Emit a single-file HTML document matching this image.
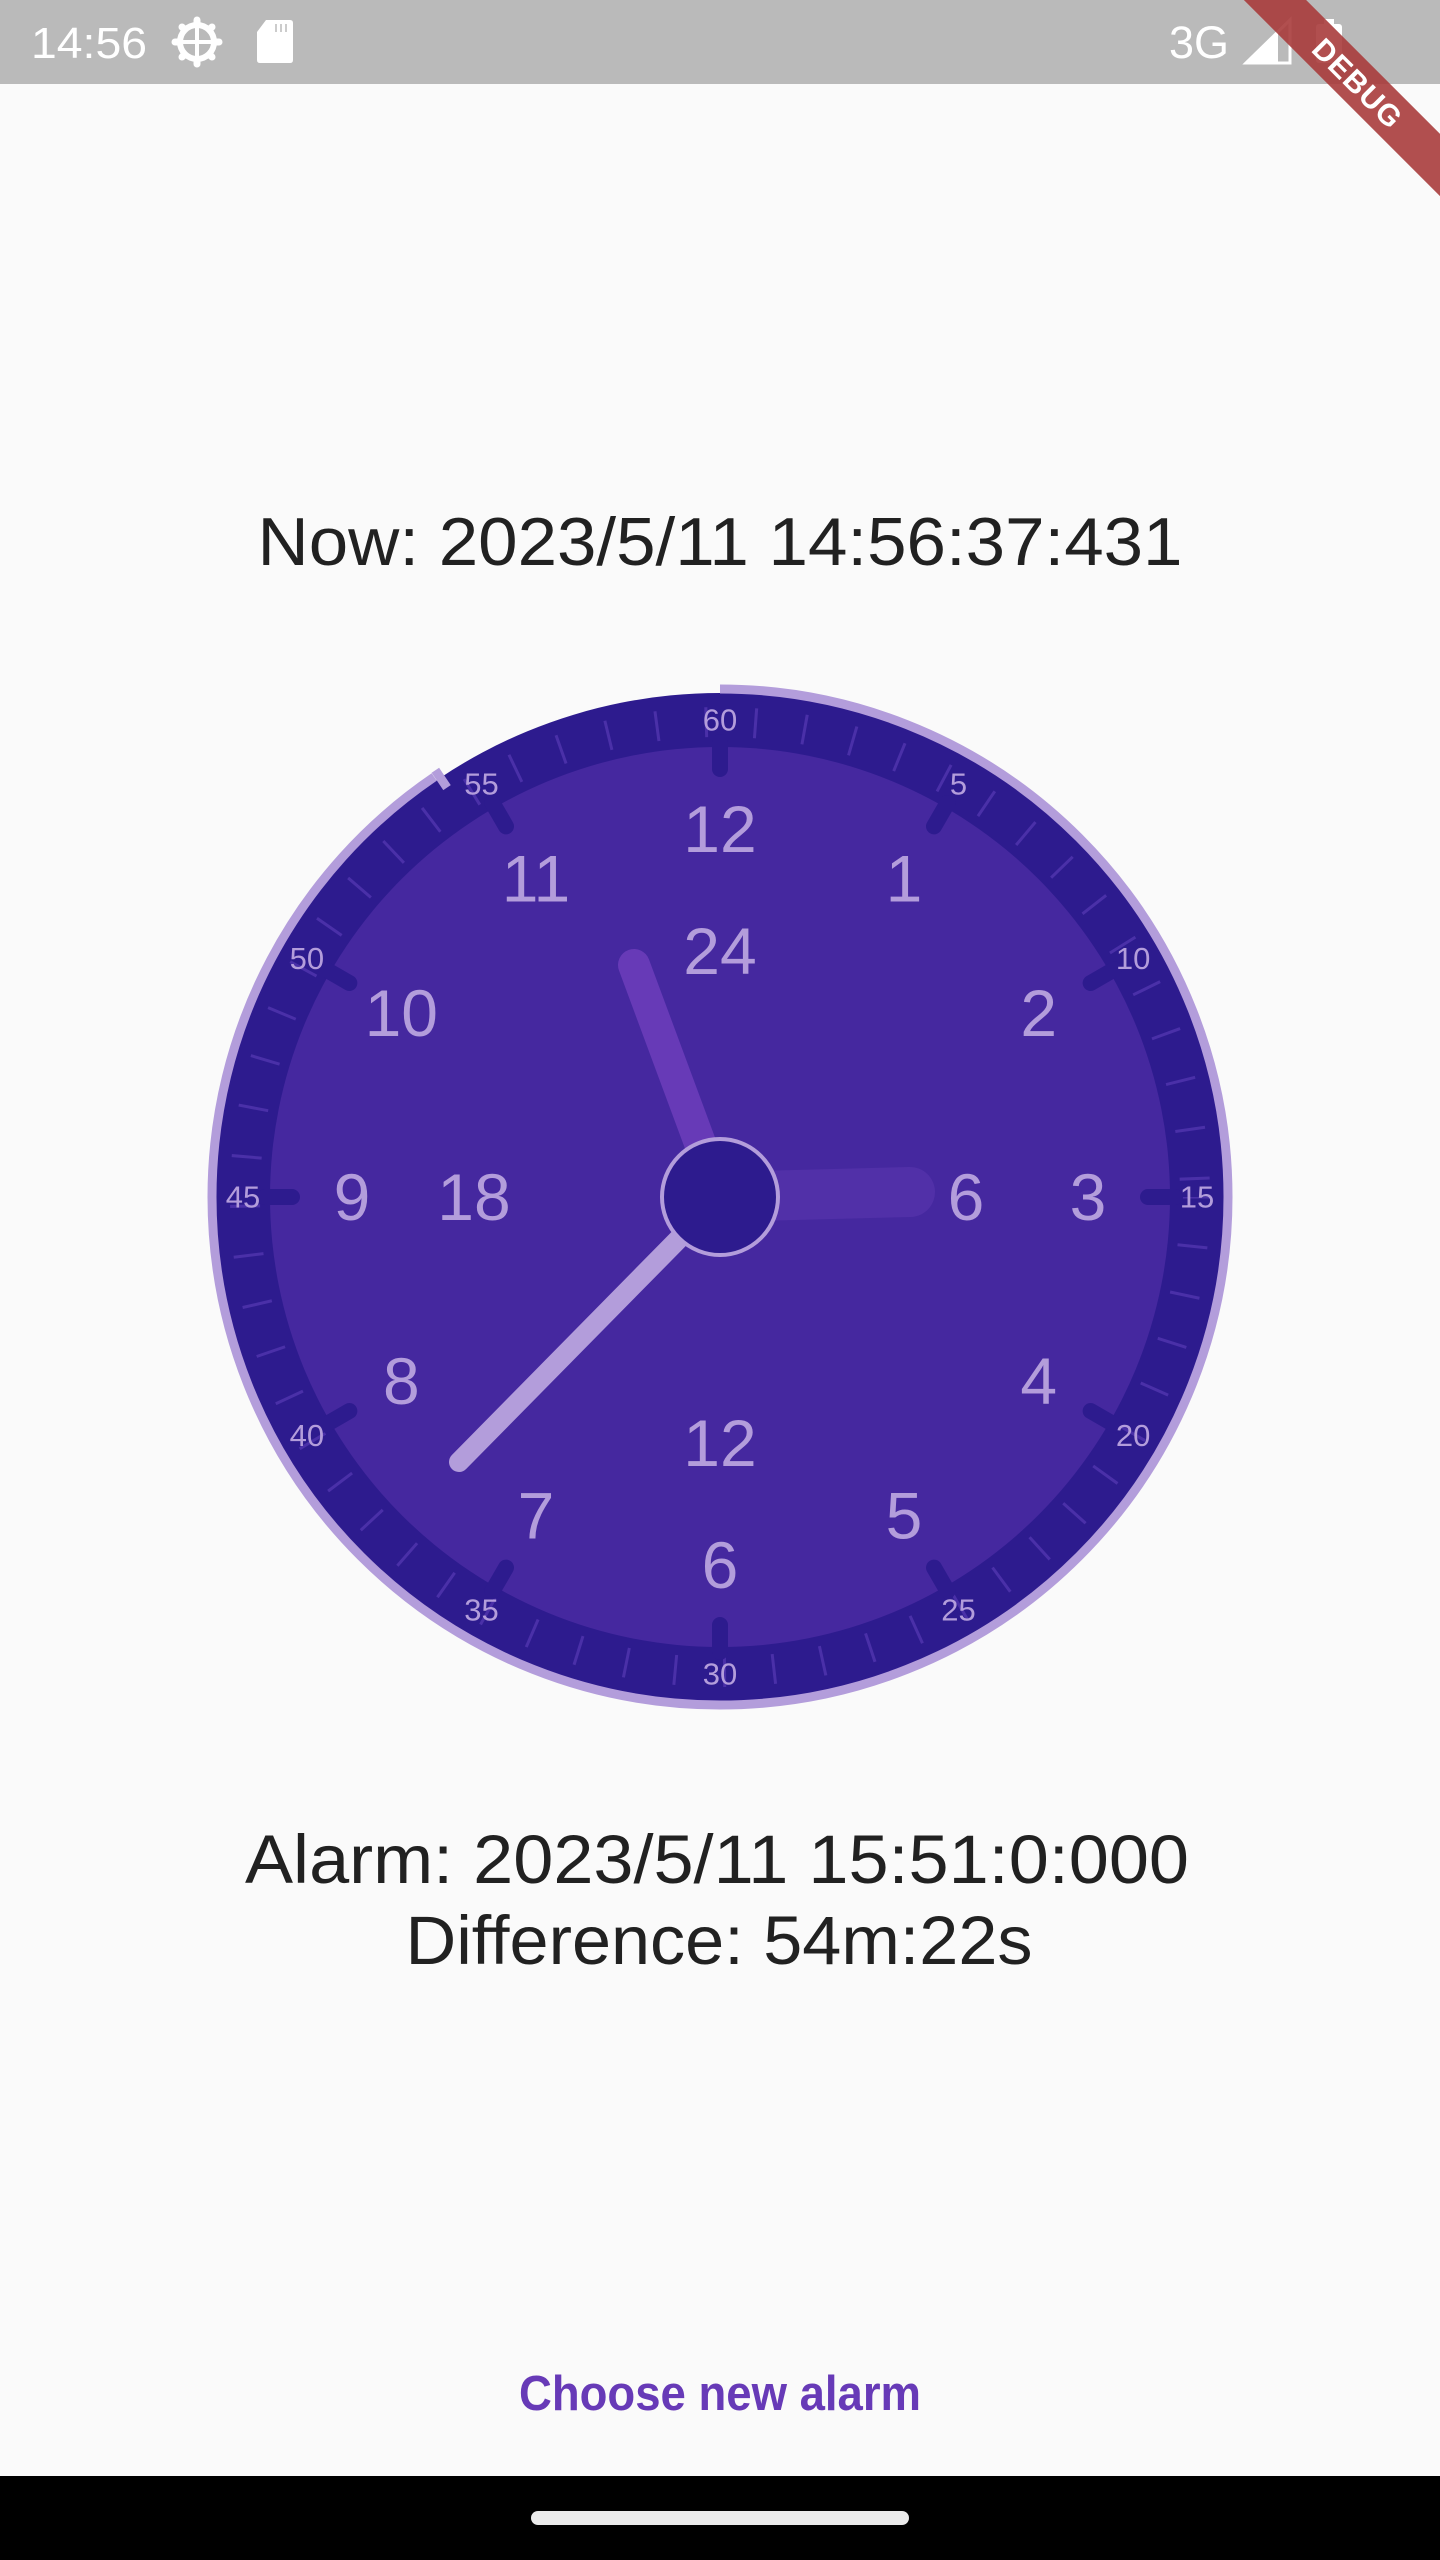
<!DOCTYPE html>
<html><head><meta charset="utf-8"><style>
html,body{margin:0;padding:0;background:#fafafa;width:1440px;height:2560px;overflow:hidden}
svg{position:absolute;left:0;top:0}
</style></head><body>
<svg width="1440" height="2560" viewBox="0 0 1440 2560" xmlns="http://www.w3.org/2000/svg" font-family="Liberation Sans, sans-serif">
<rect x="0" y="0" width="1440" height="84" fill="#bababa"/>
<!-- status bar left -->
<text x="31" y="58" font-size="44" fill="#fff" textLength="116" lengthAdjust="spacingAndGlyphs">14:56</text>
<g fill="#fff" transform="translate(197,42)">
<circle r="17" fill="none" stroke="#fff" stroke-width="6"/>
<g stroke="#fff" stroke-width="7" stroke-linecap="round">
<line x1="0" y1="-22" x2="0" y2="-18"/><line x1="0" y1="22" x2="0" y2="18"/>
<line x1="-22" y1="0" x2="-18" y2="0"/><line x1="22" y1="0" x2="18" y2="0"/>
<line x1="-15" y1="-15" x2="-13" y2="-13"/><line x1="15" y1="15" x2="13" y2="13"/>
<line x1="15" y1="-15" x2="13" y2="-13"/><line x1="-15" y1="15" x2="-13" y2="13"/>
</g>
<rect x="-14" y="-2" width="28" height="4"/><rect x="-2" y="-14" width="4" height="28"/>
</g>
<path d="M266 20 H290 Q293 20 293 23 V60 Q293 63 290 63 H260 Q257 63 257 60 V32 Z" fill="#fff"/>
<g stroke="#bababa" stroke-width="1.5"><line x1="276" y1="24" x2="276" y2="32"/><line x1="281" y1="24" x2="281" y2="32"/><line x1="286" y1="24" x2="286" y2="32"/></g>
<!-- status right -->
<text x="1169" y="58" font-size="45" fill="#fff" textLength="60" lengthAdjust="spacingAndGlyphs">3G</text>
<path d="M1246 63 L1290 20 V63 Z" fill="none" stroke="#fff" stroke-width="3"/>
<path d="M1246 63 L1278 32 V63 Z" fill="#fff"/>
<rect x="1316" y="24" width="26" height="39" rx="3" fill="#fff"/><rect x="1324" y="19" width="10" height="6" fill="#fff"/>
<!-- debug banner -->
<g transform="translate(1358,83) rotate(45)">
<rect x="-220" y="-22" width="440" height="44" fill="#a83c3c" opacity="0.9"/>
<text x="0" y="11" font-size="30" font-weight="bold" fill="#fff" text-anchor="middle" letter-spacing="1">DEBUG</text>
</g>

<!-- texts -->
<text x="720" y="565" font-size="68" fill="#212121" text-anchor="middle" textLength="925" lengthAdjust="spacingAndGlyphs">Now: 2023/5/11 14:56:37:431</text>
<text x="717" y="1883" font-size="69" fill="#212121" text-anchor="middle" textLength="944" lengthAdjust="spacingAndGlyphs">Alarm: 2023/5/11 15:51:0:000</text>
<text x="719" y="1964" font-size="69" fill="#212121" text-anchor="middle" textLength="627" lengthAdjust="spacingAndGlyphs">Difference: 54m:22s</text>
<text x="720" y="2410" font-size="49" font-weight="bold" fill="#673ab7" text-anchor="middle" textLength="402" lengthAdjust="spacingAndGlyphs">Choose new alarm</text>

<rect x="0" y="2476" width="1440" height="84" fill="#000"/>
<rect x="531" y="2511" width="378" height="14" rx="7" fill="#ebebeb"/>

<!-- clock -->
<g transform="translate(720,1197)">
<circle r="504" fill="#2d1b8e"/>
<circle r="450" fill="#45289f"/>
<circle r="475" fill="none" stroke="#4a30a8" stroke-width="30" stroke-dasharray="3 46.43" stroke-dashoffset="1.5"/>
<g stroke="#2d1b8e" stroke-width="16" stroke-linecap="round">
<line x1="0" y1="-428" x2="0" y2="-455" transform="rotate(0)"/>
<line x1="0" y1="-428" x2="0" y2="-455" transform="rotate(30)"/>
<line x1="0" y1="-428" x2="0" y2="-455" transform="rotate(60)"/>
<line x1="0" y1="-428" x2="0" y2="-455" transform="rotate(90)"/>
<line x1="0" y1="-428" x2="0" y2="-455" transform="rotate(120)"/>
<line x1="0" y1="-428" x2="0" y2="-455" transform="rotate(150)"/>
<line x1="0" y1="-428" x2="0" y2="-455" transform="rotate(180)"/>
<line x1="0" y1="-428" x2="0" y2="-455" transform="rotate(210)"/>
<line x1="0" y1="-428" x2="0" y2="-455" transform="rotate(240)"/>
<line x1="0" y1="-428" x2="0" y2="-455" transform="rotate(270)"/>
<line x1="0" y1="-428" x2="0" y2="-455" transform="rotate(300)"/>
<line x1="0" y1="-428" x2="0" y2="-455" transform="rotate(330)"/>
</g>
<!-- outer light arc -->
<circle r="508" fill="none" stroke="#b39ddb" stroke-width="9" stroke-dasharray="2888 400" transform="rotate(-90)"/>
<line x1="0" y1="-492" x2="0" y2="-513" stroke="#b39ddb" stroke-width="9" transform="rotate(-33.7)"/>

<g fill="#b39ddb" font-size="31" text-anchor="middle" dominant-baseline="central">
<g transform="rotate(0)"><text transform="translate(0,-477) rotate(0)">60</text></g>
<g transform="rotate(30)"><text transform="translate(0,-477) rotate(-30)">5</text></g>
<g transform="rotate(60)"><text transform="translate(0,-477) rotate(-60)">10</text></g>
<g transform="rotate(90)"><text transform="translate(0,-477) rotate(-90)">15</text></g>
<g transform="rotate(120)"><text transform="translate(0,-477) rotate(-120)">20</text></g>
<g transform="rotate(150)"><text transform="translate(0,-477) rotate(-150)">25</text></g>
<g transform="rotate(180)"><text transform="translate(0,-477) rotate(-180)">30</text></g>
<g transform="rotate(210)"><text transform="translate(0,-477) rotate(-210)">35</text></g>
<g transform="rotate(240)"><text transform="translate(0,-477) rotate(-240)">40</text></g>
<g transform="rotate(270)"><text transform="translate(0,-477) rotate(-270)">45</text></g>
<g transform="rotate(300)"><text transform="translate(0,-477) rotate(-300)">50</text></g>
<g transform="rotate(330)"><text transform="translate(0,-477) rotate(-330)">55</text></g>
</g>
<g fill="#b39ddb" font-size="66" text-anchor="middle" dominant-baseline="central">
<g transform="rotate(0)"><text transform="translate(0,-368) rotate(0)">12</text></g>
<g transform="rotate(30)"><text transform="translate(0,-368) rotate(-30)">1</text></g>
<g transform="rotate(60)"><text transform="translate(0,-368) rotate(-60)">2</text></g>
<g transform="rotate(90)"><text transform="translate(0,-368) rotate(-90)">3</text></g>
<g transform="rotate(120)"><text transform="translate(0,-368) rotate(-120)">4</text></g>
<g transform="rotate(150)"><text transform="translate(0,-368) rotate(-150)">5</text></g>
<g transform="rotate(180)"><text transform="translate(0,-368) rotate(-180)">6</text></g>
<g transform="rotate(210)"><text transform="translate(0,-368) rotate(-210)">7</text></g>
<g transform="rotate(240)"><text transform="translate(0,-368) rotate(-240)">8</text></g>
<g transform="rotate(270)"><text transform="translate(0,-368) rotate(-270)">9</text></g>
<g transform="rotate(300)"><text transform="translate(0,-368) rotate(-300)">10</text></g>
<g transform="rotate(330)"><text transform="translate(0,-368) rotate(-330)">11</text></g>
<text x="0" y="-246">24</text>
<text x="246" y="0">6</text>
<text x="0" y="246">12</text>
<text x="-246" y="0">18</text>
</g>
<!-- hands -->
<line x1="0" y1="0" x2="190" y2="-5" stroke="#5130a8" stroke-width="50" stroke-linecap="round"/>
<line x1="0" y1="0" x2="-86" y2="-232" stroke="#673ab7" stroke-width="32" stroke-linecap="round"/>
<line x1="0" y1="0" x2="-261" y2="265" stroke="#b39ddb" stroke-width="20" stroke-linecap="round"/>
<circle r="58" fill="#2d1b8e" stroke="#b39ddb" stroke-width="4"/>
</g>
</svg>
</body></html>
